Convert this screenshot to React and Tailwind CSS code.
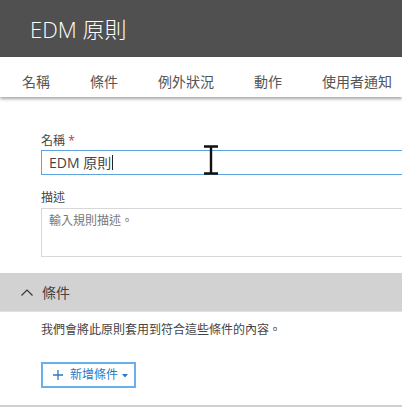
const FONT = { fontFamily: '"Open Sans", "Noto Sans", "Noto Sans CJK TC", sans-serif' };

const tabs = ['名稱', '條件', '例外狀況', '動作', '使用者通知'];

// mouse I-beam over the name field
const IBeam = () => (
    <svg className="absolute left-[203px] top-[145px]" width="16" height="30" viewBox="0 0 16 30">
        <path d="M1 1.5h14M1 28.5h14M8 1.5v27" stroke="#111" strokeWidth="2.4" fill="none" />
    </svg>
);

export default function App() {
    return (
        <div className="relative w-[402px] h-[407px] overflow-hidden bg-white text-[#444]" style={FONT}>
            <header className="h-[57px] bg-[#505050] flex items-center pl-[30px]">
                <h1 className="text-[22px] font-light text-white leading-none">EDM 原則</h1>
            </header>

            <nav className="relative z-10 h-[40px] bg-white flex items-center gap-[40px] pl-[22px] pt-[8px] whitespace-nowrap text-[14px] text-[#555] shadow-[0_2px_3px_rgba(0,0,0,0.35)]">
                {tabs.map((t) => (
                    <span key={t}>{t}</span>
                ))}
            </nav>

            <div className="pl-[41px] pt-[36px]">
                <label className="block text-[12px] leading-[16px] text-[#444]">
                    名稱 <span className="text-[#c4314b]">*</span>
                </label>
                <div className="mt-[1px] w-[400px] h-[25px] border border-[#5ea3e0] flex items-center pl-[7px] text-[14px] text-[#444]">
                    EDM 原則
                    <span className="ml-[1px] w-px h-[15px] bg-[#222]"></span>
                </div>

                <label className="block mt-[15px] text-[12px] leading-[16px] text-[#444]">描述</label>
                <div className="mt-[2px] w-[400px] h-[49px] border border-[#d8d8d8] pl-[7px] pt-[4px] text-[12px] leading-[16px] text-[#777]">
                    輸入規則描述。
                </div>
            </div>

            <div className="mt-[16px] h-[39px] bg-[#d2d2d2] border-b border-[#e2e2e2] flex items-center pl-[21px] gap-[9px]">
                <svg width="12" height="7" viewBox="0 0 12 7">
                    <path d="M0.5 6.5L6 1l5.5 5.5" stroke="#333" strokeWidth="1.1" fill="none" />
                </svg>
                <span className="text-[14px] text-[#444]">條件</span>
            </div>

            <div className="pl-[41px]">
                <p className="mt-[10px] text-[12px] leading-[16px] text-[#444]">我們會將此原則套用到符合這些條件的內容。</p>
                <button className="mt-[24px] h-[26px] w-[95px] border-2 border-[#6aaeea] flex items-center pl-[10px] text-[12px] text-[#2b79c2]">
                    <svg width="10" height="10" viewBox="0 0 10 10">
                        <path d="M5 0v10M0 5h10" stroke="#2b79c2" strokeWidth="1.3" />
                    </svg>
                    <span className="ml-[7px]">新增條件</span>
                    <svg className="ml-[4px] mt-[2px]" width="6" height="4" viewBox="0 0 6 4">
                        <path d="M0 0h6L3 3.5z" fill="#2b79c2" />
                    </svg>
                </button>
            </div>

            <div className="mt-[17px] h-[2px] bg-[#d0d0d0]"></div>

            <IBeam />
        </div>
    );
}
